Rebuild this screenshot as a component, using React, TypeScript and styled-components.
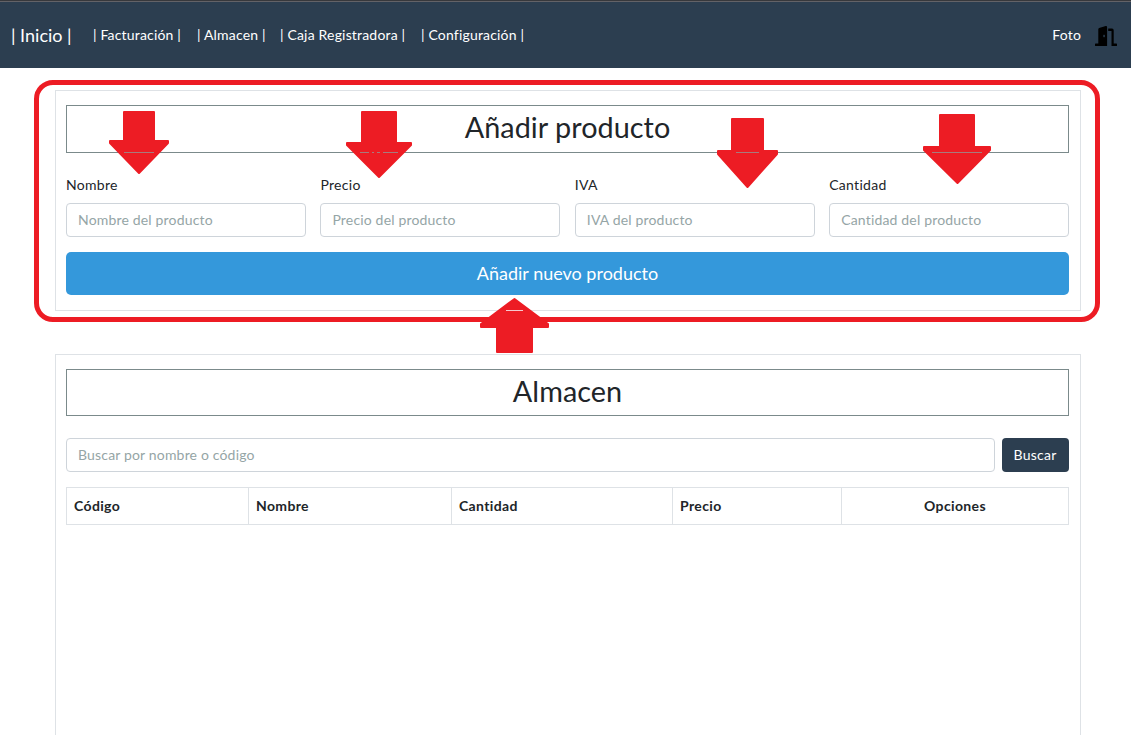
import React from "react";
import styled, { createGlobalStyle } from "styled-components";
import { FaDoorOpen } from "react-icons/fa";

const GlobalStyle = createGlobalStyle`
  *, *::before, *::after { box-sizing: border-box; }
  html, body { margin: 0; height: 100%; overflow: hidden; }
  body {
    background: #fff;
    color: #212529;
    font-family: Lato, "Liberation Sans", sans-serif;
    font-size: 14px;
    letter-spacing: 0.18px;
    line-height: 1.5;
    font-variant-ligatures: none;
  }
`;

const Page = styled.div`
  position: relative;
  display: flex;
  flex-direction: column;
  height: 735px;
  overflow: hidden;
`;

const Navbar = styled.nav`
  display: flex;
  align-items: center;
  flex: none;
  height: 68px;
  padding: 2px 14px 0 11px;
  background: #2c3e50;
  box-shadow: inset 0 1px #37383c, inset 0 2px #636267;
  color: #fff;
`;

const Brand = styled.a`
  width: 82px;
  padding-top: 1px;
  font-size: 18px;
  letter-spacing: 0;
  white-space: nowrap;
`;

const NavItem = styled.a<{ $width: number }>`
  width: ${(p) => p.$width}px;
  padding-bottom: 2px;
  white-space: nowrap;
`;

const NavEnd = styled.div`
  display: flex;
  align-items: center;
  gap: 14px;
  margin-left: auto;

  span { padding-bottom: 2px; }
  svg { display: block; width: 22px; height: 20px; margin-top: 2px; color: #000; }
`;

const Content = styled.main`
  display: flex;
  flex-direction: column;
  flex: 1;
  gap: 43px;
  width: 1026px;
  margin: 22px 0 0 55px;
`;

const Card = styled.section<{ $height: number }>`
  flex: none;
  height: ${(p) => p.$height}px;
  padding: 14px 11px 0 10px;
  border: 1px solid #dee2e6;
`;

const Title = styled.h2<{ $height: number }>`
  display: flex;
  align-items: flex-start;
  justify-content: center;
  height: ${(p) => p.$height}px;
  margin: 0;
  padding-top: 4px;
  border: 1px solid #7b8a8b;
  font-size: 28.8px;
  font-weight: 400;
  letter-spacing: 0.04px;
  line-height: 34px;
`;

const Fields = styled.div`
  display: grid;
  grid-template-columns: repeat(4, 1fr);
  column-gap: 14.6px;
  margin-top: 21px;
`;

const Field = styled.label`
  display: flex;
  flex-direction: column;
  gap: 7px;
  letter-spacing: 0.3px;
  line-height: 22px;
`;

const Input = styled.input`
  flex: 1;
  width: 100%;
  min-height: 34px;
  height: 34px;
  padding: 0 11px 1px;
  border: 1px solid #ced4da;
  border-radius: 4px;
  background: #fff;
  font: inherit;
  letter-spacing: 0.17px;
  outline: none;

  &::placeholder { color: #95a5a6; opacity: 1; }
`;

const AddButton = styled.button`
  width: 100%;
  height: 43px;
  margin-top: 15px;
  padding: 0 0 2px;
  border: 0;
  border-radius: 5px;
  background: #3498db;
  color: #fff;
  font: 18px Lato, sans-serif;
`;

const SearchRow = styled.div`
  display: flex;
  gap: 7px;
  margin-top: 22px;
`;

const SearchButton = styled.button`
  flex: none;
  width: 67px;
  height: 34px;
  padding: 0 1px 2px 0;
  border: 0;
  border-radius: 4px;
  background: #2c3e50;
  color: #fff;
  font: inherit;
  letter-spacing: 0.25px;
`;

const Table = styled.table`
  width: calc(100% - 1px);
  margin-top: 15px;
  border-collapse: collapse;
  table-layout: fixed;
`;

const HeadCell = styled.th<{ $width: number; $center?: boolean }>`
  width: ${(p) => p.$width}px;
  height: 37px;
  padding: 0 7px 2px;
  border: 1px solid #dee2e6;
  font-weight: 700;
  letter-spacing: 0.36px;
  text-align: ${(p) => (p.$center ? "center" : "left")};
`;

const Annotations = styled.svg`
  position: absolute;
  inset: 0;
  pointer-events: none;
`;

const links = [
  { label: "| Facturación |", width: 104 },
  { label: "| Almacen |", width: 83 },
  { label: "| Caja Registradora |", width: 141 },
  { label: "| Configuración |", width: 110 },
];

const fields = [
  { label: "Nombre", hint: "Nombre del producto" },
  { label: "Precio", hint: "Precio del producto" },
  { label: "IVA", hint: "IVA del producto" },
  { label: "Cantidad", hint: "Cantidad del producto" },
];

const columns = [
  { label: "Código", width: 182 },
  { label: "Nombre", width: 203 },
  { label: "Cantidad", width: 221 },
  { label: "Precio", width: 169 },
  { label: "Opciones", width: 227, center: true },
];

export default function App() {
  return (
    <>
      <GlobalStyle />
      <Page>
        <Navbar>
          <Brand>| Inicio |</Brand>
          {links.map((l) => (
            <NavItem key={l.label} $width={l.width}>{l.label}</NavItem>
          ))}
          <NavEnd>
            <span>Foto</span>
            <FaDoorOpen preserveAspectRatio="none" />
          </NavEnd>
        </Navbar>
        <Content>
          <Card $height={221}>
            <Title $height={48}>Añadir producto</Title>
            <Fields>
              {fields.map((f) => (
                <Field key={f.label}>
                  {f.label}
                  <Input placeholder={f.hint} />
                </Field>
              ))}
            </Fields>
            <AddButton>Añadir nuevo producto</AddButton>
          </Card>
          <Card $height={500}>
            <Title $height={47}>Almacen</Title>
            <SearchRow>
              <Input placeholder="Buscar por nombre o código" />
              <SearchButton>Buscar</SearchButton>
            </SearchRow>
            <Table>
              <thead>
                <tr>
                  {columns.map((c) => (
                    <HeadCell key={c.label} $width={c.width} $center={c.center}>{c.label}</HeadCell>
                  ))}
                </tr>
              </thead>
            </Table>
          </Card>
        </Content>
        <Annotations width="1131" height="735" viewBox="0 0 1131 735" fill="none">
          <rect x="36.5" y="82.5" width="1061" height="237" rx="16.5" stroke="#ed1c24" strokeWidth="5" />
          <g fill="#ed1c24" stroke="#ed1c24" strokeWidth="2" strokeLinejoin="round">
            <path d="M124 112H154V141H168V143L139 173L110 143V141H124Z" />
            <path d="M362 112H396V143H411V145L379 177L347 145V143H362Z" />
            <path d="M732 119H763V151H777V154L747.5 187L718 154V151H732Z" />
            <path d="M940 115H974V147H990V150L957.5 183L924 150V147H940Z" />
            <path d="M514.5 299L548 324V327H532V352H497V327H481V324Z" />
          </g>
          <path d="M124 152.500H154M360 152.500H369M372 152.500H374M377 152.500H380M383 152.500H398M736 152.500H759M932 152.500H982" stroke="#a87a7d" />
          <path d="M506 310.500H523" stroke="#f5c9ce" />
        </Annotations>
      </Page>
    </>
  );
}
